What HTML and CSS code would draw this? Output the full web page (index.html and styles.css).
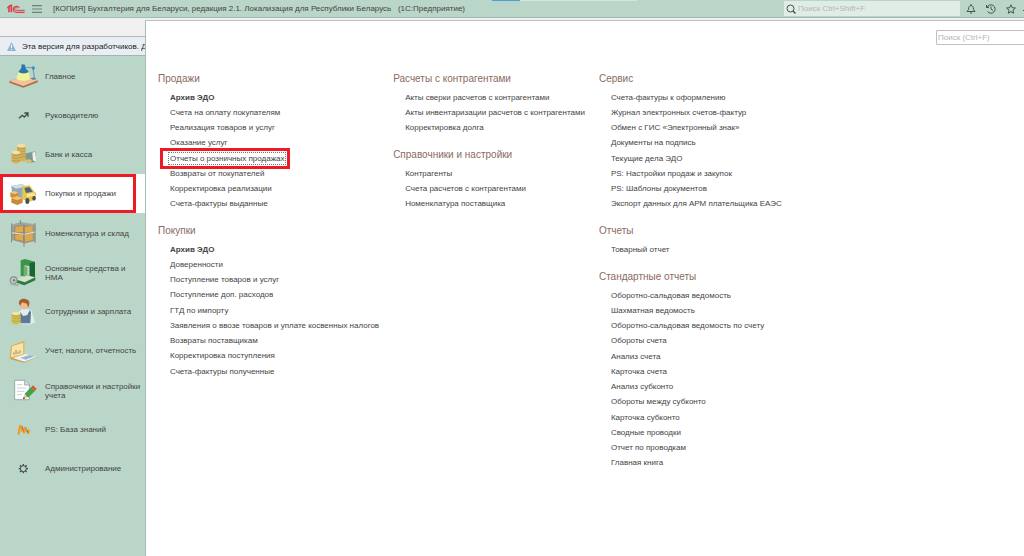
FILE: index.html
```
<!DOCTYPE html>
<html lang="ru">
<head>
  <meta charset="utf-8">
  <title>[КОПИЯ] Бухгалтерия для Беларуси</title>
  <link rel="stylesheet" href="styles.css">
</head>
<body>
  <header class="topbar">
    <svg class="logo" viewBox="0 0 54 30" fill="none" stroke="#dc3f47" stroke-width="4">
      <path d="M1 12L6 8V25M5 7L13 4V25" stroke-width="5"/>
      <path d="M37 11A10 9 0 1 0 28 25H53"/>
      <path d="M32 13A5 4 0 1 0 28 19H53" stroke-width="3"/>
    </svg>
    <button class="icon-button menu-button" aria-label="Меню">
      <svg viewBox="0 0 9 9" stroke="#6f8378" stroke-width="1"><path d="M0 1.500H9M0 4.500H9M0 7.500H9"/></svg>
    </button>
    <h1 class="app-title">[КОПИЯ] Бухгалтерия для Беларуси, редакция 2.1. Локализация для Республики Беларусь &nbsp; (1С:Предприятие)</h1>
    <div class="progress"></div>
    <label class="global-search">
      <svg viewBox="0 0 10 10" fill="none" stroke="#46524c"><circle cx="4.500" cy="4.500" r="3.500"/><path d="M7 7L9.500 9.500" stroke-width="1.500"/></svg>
      <input type="text" placeholder="Поиск Ctrl+Shift+F" aria-label="Поиск">
    </label>
    <div class="tools">
      <button class="icon-button" aria-label="Уведомления">
        <svg viewBox="0 0 10 10" fill="none" stroke="#46524c"><path d="M1 7.500H9L7.500 5.500C7.500 3 6.500 1.500 5 1.500S2.500 3 2.500 5.500Z"/><path d="M4 9H6M5 0V1.500"/></svg>
      </button>
      <button class="icon-button" aria-label="История">
        <svg viewBox="0 0 10 10" fill="none" stroke="#46524c"><path d="M1 3.500A4.200 4.200 0 1 1 1.500 7.500M.5 1V3.500H3M5 2.500V5L7 6.500"/></svg>
      </button>
      <button class="icon-button" aria-label="Избранное">
        <svg viewBox="0 0 10 10" fill="none" stroke="#46524c"><path d="M5 .8L6.300 3.700L9.400 4L7 6.200L7.700 9.200L5 7.600L2.300 9.200L3 6.200L.6 4L3.700 3.700Z"/></svg>
      </button>
      <button class="icon-button more" aria-label="Сервис">
        <svg viewBox="0 0 10 10" stroke="#46524c"><path d="M0 6.500H10"/></svg>
      </button>
    </div>
  </header>

  <div class="workspace">
    <aside class="side">
      <div class="tabs-strip"></div>
      <div class="notice">
        <svg viewBox="0 0 9 9"><path d="M4.500 0L9 9H0Z" fill="#92b4cf"/><path d="M4.500 3V6M4.500 7V8" stroke="#fff"/></svg>
        <span>Эта версия для разработчиков. Дл</span>
      </div>
      <nav class="sections">
        <a href="#">
          <svg viewBox="0 0 90 90">
            <path d="M4 57L48 42L89 55V61L46 77L4 62Z" fill="#a9714b"/>
            <path d="M4 57L48 42L89 55L46 72Z" fill="#efc49a"/>
            <path d="M32 28L62 28L66 50C55 59 35 57 25 50Z" fill="#f2f399"/>
            <path d="M47 16L75 17L79 49" fill="none" stroke="#7ba2ba" stroke-width="4"/>
            <path d="M41 7L51 8L52 18L63 30C53 36 39 35 31 30L40 18Z" fill="#2877aa"/>
            <circle cx="76" cy="18" r="5" fill="#3f8fc4"/>
            <path d="M67 49L79 46L85 51L75 54Z" fill="#638698"/>
          </svg>
          <span>Главное</span>
        </a>
        <a href="#">
          <svg viewBox="0 0 90 90" fill="none" stroke="#434b47" stroke-width="4"><path d="M33 52L43 43L49 48L59 37M49 36H60V47"/></svg>
          <span>Руководителю</span>
        </a>
        <a href="#">
          <svg viewBox="0 0 90 90">
            <path d="M42 43L82 34L86 66L58 68Z" fill="#7b9b8c"/>
            <path d="M73 38L81 35L86 67L75 61Z" fill="#eef3ed"/>
            <path d="M27 17V64H53V17Z" fill="#d5b45f"/>
            <ellipse cx="40" cy="17" rx="13" ry="5" fill="#f6dfa1"/>
            <path d="M27 24Q40 32 53 24M27 32Q40 40 53 32M27 40Q40 48 53 40M27 48Q40 56 53 48" fill="none" stroke="#a58a45" stroke-width="2"/>
            <path d="M11 37V67Q23 75 37 67V37Z" fill="#d7b65f"/>
            <ellipse cx="24" cy="37" rx="13" ry="5" fill="#f7e2a6"/>
            <path d="M11 44Q24 52 37 44M11 52Q24 60 37 52M11 60Q24 68 37 60" fill="none" stroke="#a58a45" stroke-width="2"/>
            <ellipse cx="61" cy="63" rx="10" ry="5" fill="#ddbf70"/>
          </svg>
          <span>Банк и касса</span>
        </a>
        <a href="#" class="active">
          <svg viewBox="0 0 90 90">
            <path d="M10 21L43 15L52 23V58L13 53Z" fill="#8faabd"/>
            <path d="M10 21L43 15L52 23L24 29Z" fill="#d0dee7"/>
            <path d="M43 22L65 19L77 35L84 43V61L65 68L42 60Z" fill="#e6c650"/>
            <path d="M49 27L64 24L74 38L54 42Z" fill="#526672"/>
            <path d="M56 45L79 42L82 50L57 54Z" fill="#f6e6a0"/>
            <ellipse cx="58" cy="66" rx="6" ry="9" fill="#49504e"/>
            <ellipse cx="78" cy="58" rx="5" ry="7" fill="#49504e"/>
            <path d="M7 41L17 36L31 40V54L20 59L7 54Z" fill="#c9913d"/>
            <path d="M7 41L17 36L31 40L21 46Z" fill="#f0c879"/>
            <path d="M10 58L27 51L44 58V71L28 78L10 71Z" fill="#c98937"/>
            <path d="M10 58L27 51L44 58L28 64Z" fill="#efc174"/>
          </svg>
          <span>Покупки и продажи</span>
        </a>
        <a href="#">
          <svg viewBox="0 0 90 90">
            <path d="M10 17L38 9L82 16V71L49 79L10 66Z" fill="#9ca8a2"/>
            <path d="M17 22L43 17L77 22V65L49 70L17 62Z" fill="#a58c68"/>
            <path d="M22 24L45 21V39L22 40ZM50 23L74 22V39L50 41ZM22 47L45 47V65L22 61ZM50 48L74 45V63L50 68Z" fill="#dfaa4d"/>
            <path d="M10 41L49 46L82 39M10 65L49 77L82 69" fill="none" stroke="#d3d9d5" stroke-width="4"/>
            <path d="M11 13V70M48 16V83M81 12V72M37 3V16" stroke="#7f8b86" stroke-width="3"/>
          </svg>
          <span>Номенклатура и склад</span>
        </a>
        <a href="#">
          <svg viewBox="0 0 90 90">
            <path d="M22 65L53 51L82 58V67L49 82L22 73Z" fill="#287c38"/>
            <path d="M38 7L51 3L81 11V60L65 65V24L49 22V57L38 53Z" fill="#3b9447"/>
            <path d="M65 16L81 12V60L65 65Z" fill="#17652f"/>
            <path d="M22 64L53 51L82 58L50 73Z" fill="#d2e2cf"/>
            <path d="M47 23L58 28V51L47 57Z" fill="#75ad74"/>
            <circle cx="17" cy="67" r="10" fill="#cad2ce" stroke="#8b9791" stroke-width="4"/>
            <circle cx="18" cy="67" r="4" fill="#738079"/>
            <path d="M6 76L27 82L35 76" stroke="#a4afa9" stroke-width="5" fill="none"/>
          </svg>
          <span>Основные средства и НМА</span>
        </a>
        <a href="#">
          <svg viewBox="0 0 90 90">
            <path d="M32 45L49 32L70 41L81 76L67 82H33Z" fill="#e1edf5"/>
            <path d="M36 45L46 57L58 54L65 40L69 46L67 79H35Z" fill="#5d7c92"/>
            <path d="M34 16C36 4 60 5 64 19L61 31C52 42 40 38 36 28Z" fill="#edbd8d"/>
            <path d="M33 20C31 4 51 1 61 10C67 17 63 28 60 32L57 20L42 16L37 26Z" fill="#a75c2d"/>
            <path d="M11 49V78Q24 87 38 78V49Z" fill="#d5bd55"/>
            <ellipse cx="24" cy="49" rx="13" ry="5" fill="#f2e8a4"/>
            <path d="M11 55Q24 63 38 55M11 62Q24 70 38 62M11 70Q24 78 38 70" fill="none" stroke="#ae9a48" stroke-width="2"/>
          </svg>
          <span>Сотрудники и зарплата</span>
        </a>
        <a href="#">
          <svg viewBox="0 0 90 90">
            <path d="M4 68L47 56L89 63L48 80Z" fill="#cb9a4a"/>
            <path d="M9 29L49 15V58L5 68Z" fill="#d8ac50"/>
            <path d="M12 31L46 20V54L9 64Z" fill="#fae3a3"/>
            <path d="M18 57V49M24 55V42M30 54V47M36 52V43" stroke="#8b968e" stroke-width="3"/>
            <path d="M14 66L52 54L88 62L49 77Z" fill="#edf1ef"/>
            <path d="M37 65L65 57L80 61L53 71Z" fill="#9ab5d6"/>
          </svg>
          <span>Учет, налоги, отчетность</span>
        </a>
        <a href="#">
          <svg viewBox="0 0 90 90">
            <path d="M20 13H51L64 26V71H20Z" fill="#fff" stroke="#7e878b" stroke-width="2"/>
            <path d="M50 13V27H64" fill="#dce0e2" stroke="#7e878b" stroke-width="2"/>
            <path d="M27 26H42M27 36H54M27 46H50M27 56H42" stroke="#b2b9be" stroke-width="2"/>
            <path d="M45 70L50 53L60 64Z" fill="#f0c792"/>
            <path d="M50 53L69 34L81 45L60 65Z" fill="#44a24a"/>
            <path d="M69 34L75 28L86 38L81 45Z" fill="#d35d38"/>
            <path d="M45 70L47 63L52 67Z" fill="#333"/>
          </svg>
          <span>Справочники и настройки учета</span>
        </a>
        <a href="#">
          <svg viewBox="0 0 90 90" fill="none">
            <path d="M41 34L49 54M53 38L60 54" stroke="#4f5670" stroke-width="4"/>
            <path d="M32 59L35 36Q37 28 40 37L43 50M48 55L50 40Q52 34 55 48M61 57L63 44" stroke="#f29a25" stroke-width="6"/>
          </svg>
          <span>PS: База знаний</span>
        </a>
        <a href="#">
          <svg viewBox="0 0 90 90" fill="none" stroke="#434b47"><circle cx="46" cy="44" r="9" stroke-width="3"/><path d="M46 30V35M46 53V58M32 44H37M55 44H60M36 34L40 38M52 50L56 54M36 54L40 50M52 38L56 34" stroke-width="4"/></svg>
          <span>Администрирование</span>
        </a>
      </nav>
    </aside>

    <main class="panel">
      <input class="panel-search" type="text" placeholder="Поиск (Ctrl+F)" aria-label="Поиск в разделе">
      <div class="columns">
        <div class="column">
          <section>
            <h2>Продажи</h2>
            <ul>
              <li><a href="#" class="important">Архив ЭДО</a></li>
              <li><a href="#">Счета на оплату покупателям</a></li>
              <li><a href="#">Реализация товаров и услуг</a></li>
              <li><a href="#">Оказание услуг</a></li>
              <li><a href="#" class="current">Отчеты о розничных продажах</a></li>
              <li><a href="#">Возвраты от покупателей</a></li>
              <li><a href="#">Корректировка реализации</a></li>
              <li><a href="#">Счета-фактуры выданные</a></li>
            </ul>
          </section>
          <section>
            <h2>Покупки</h2>
            <ul>
              <li><a href="#" class="important">Архив ЭДО</a></li>
              <li><a href="#">Доверенности</a></li>
              <li><a href="#">Поступление товаров и услуг</a></li>
              <li><a href="#">Поступление доп. расходов</a></li>
              <li><a href="#">ГТД по импорту</a></li>
              <li><a href="#">Заявления о ввозе товаров и уплате косвенных налогов</a></li>
              <li><a href="#">Возвраты поставщикам</a></li>
              <li><a href="#">Корректировка поступления</a></li>
              <li><a href="#">Счета-фактуры полученные</a></li>
            </ul>
          </section>
        </div>

        <div class="column">
          <section>
            <h2>Расчеты с контрагентами</h2>
            <ul>
              <li><a href="#">Акты сверки расчетов с контрагентами</a></li>
              <li><a href="#">Акты инвентаризации расчетов с контрагентами</a></li>
              <li><a href="#">Корректировка долга</a></li>
            </ul>
          </section>
          <section>
            <h2>Справочники и настройки</h2>
            <ul>
              <li><a href="#">Контрагенты</a></li>
              <li><a href="#">Счета расчетов с контрагентами</a></li>
              <li><a href="#">Номенклатура поставщика</a></li>
            </ul>
          </section>
        </div>

        <div class="column">
          <section>
            <h2>Сервис</h2>
            <ul>
              <li><a href="#">Счета-фактуры к оформлению</a></li>
              <li><a href="#">Журнал электронных счетов-фактур</a></li>
              <li><a href="#">Обмен с ГИС «Электронный знак»</a></li>
              <li><a href="#">Документы на подпись</a></li>
              <li><a href="#">Текущие дела ЭДО</a></li>
              <li><a href="#">PS: Настройки продаж и закупок</a></li>
              <li><a href="#">PS: Шаблоны документов</a></li>
              <li><a href="#">Экспорт данных для АРМ плательщика ЕАЭС</a></li>
            </ul>
          </section>
          <section>
            <h2>Отчеты</h2>
            <ul>
              <li><a href="#">Товарный отчет</a></li>
            </ul>
          </section>
          <section>
            <h2>Стандартные отчеты</h2>
            <ul>
              <li><a href="#">Оборотно-сальдовая ведомость</a></li>
              <li><a href="#">Шахматная ведомость</a></li>
              <li><a href="#">Оборотно-сальдовая ведомость по счету</a></li>
              <li><a href="#">Обороты счета</a></li>
              <li><a href="#">Анализ счета</a></li>
              <li><a href="#">Карточка счета</a></li>
              <li><a href="#">Анализ субконто</a></li>
              <li><a href="#">Обороты между субконто</a></li>
              <li><a href="#">Карточка субконто</a></li>
              <li><a href="#">Сводные проводки</a></li>
              <li><a href="#">Отчет по проводкам</a></li>
              <li><a href="#">Главная книга</a></li>
            </ul>
          </section>
        </div>
      </div>
    </main>
  </div>
</body>
</html>
```
FILE: styles.css
```
:root {
  --green: #b9d6c8;
  --line: #a9bdb3;
  --text: #444;
  --heading: #8a6b60;
  --mark: #ed1c24;
}

* {
  box-sizing: border-box;
}

body {
  margin: 0;
  min-height: 100vh;
  display: flex;
  flex-direction: column;
  font-family: "Liberation Sans", Arial, sans-serif;
  font-size: 8px;
  color: var(--text);
  background: #fff;
}

a {
  color: inherit;
  text-decoration: none;
}

svg {
  display: block;
  flex: none;
}

.topbar {
  position: relative;
  display: flex;
  align-items: center;
  height: 18px;
  padding-left: 7px;
  background: var(--green);
  border-bottom: 1px solid #a0bcae;
}

.logo {
  width: 18px;
  height: 10px;
}

.icon-button {
  padding: 0;
  border: 0;
  background: none;
  cursor: pointer;
}

.icon-button svg {
  width: 10px;
  height: 10px;
}

.menu-button {
  margin: 0 11px 0 7px;
}

.app-title {
  margin: 0;
  font-size: 8px;
  font-weight: normal;
  line-height: 12px;
  white-space: nowrap;
}

/* loading strip over the top edge */
.progress {
  position: absolute;
  top: 0;
  left: 48%;
  width: 145px;
  height: 1px;
  background: #d5e4dc;
  border-left: 28px solid #4c9fd4;
}

.global-search {
  display: flex;
  align-items: center;
  gap: 2px;
  width: 176px;
  height: 15px;
  margin-left: auto;
  padding-left: 2px;
  background: #e0ede6;
}

.global-search svg {
  width: 10px;
  height: 10px;
}

.global-search input {
  flex: 1;
  min-width: 0;
  padding: 0;
  border: 0;
  background: none;
  font: inherit;
}

input::placeholder {
  color: #b5b5b5;
}

.tools {
  display: flex;
  gap: 10px;
  width: 64px;
  padding-left: 6px;
  overflow: hidden;
}

.more {
  margin-left: -3px;
}

.workspace {
  flex: 1;
  display: flex;
  background: #f0f0f0;
}

.side {
  width: 145px;
  flex: none;
  display: flex;
  flex-direction: column;
}

.tabs-strip {
  height: 18px;
}

.notice {
  display: flex;
  align-items: center;
  gap: 6px;
  height: 20px;
  padding-left: 7px;
  overflow: hidden;
  white-space: nowrap;
  color: #222;
  background: #e9eef4;
  border-top: 1px solid #b4b8b6;
  border-bottom: 1px solid #a5b5ad;
}

.notice svg {
  width: 9px;
  height: 9px;
}

.sections {
  flex: 1;
  padding-top: 1px;
  background: var(--green);
}

.sections a {
  position: relative;
  display: flex;
  align-items: center;
  gap: 7px;
  height: 39px;
  padding: 0 2px 0 8px;
  line-height: 9px;
}

.sections a:nth-child(4n) {
  margin-bottom: 1px;
}

.sections svg {
  width: 30px;
  height: 30px;
}

.sections .active {
  background: #fff;
}

.sections .active::after {
  content: "";
  position: absolute;
  inset: 0 9px 0 0;
  border: 3px solid var(--mark);
}

.panel {
  flex: 1;
  min-width: 0;
  margin-top: 2px;
  display: flex;
  flex-direction: column;
  background: #fff;
  border-top: 1px solid #c0c0c0;
  border-left: 1px solid var(--line);
}

.panel-search {
  align-self: flex-end;
  width: 88px;
  height: 15px;
  margin-top: 9px;
  padding: 0 1px;
  border: 1px solid #c0c0c0;
  border-right: 0;
  border-radius: 2px 0 0 2px;
  font: inherit;
}

.columns {
  display: grid;
  grid-template-columns: repeat(3, max-content);
  column-gap: 14px;
  padding: 28px 12px;
}

.column h2 {
  margin: 0 0 5px;
  font-size: 10px;
  font-weight: normal;
  line-height: 12px;
  color: var(--heading);
}

.column ul {
  margin: 0 0 14px;
  padding: 0 0 0 12px;
  list-style: none;
}

.column li {
  line-height: 15px;
}

.column li:nth-child(4n) {
  margin-bottom: 1px;
}

.important {
  font-weight: bold;
}

.current {
  position: relative;
  outline: 1px dotted #777;
  outline-offset: 1px;
}

.current::after {
  content: "";
  position: absolute;
  inset: -6px -6px -6px -10px;
  border: 3px solid var(--mark);
}
```
